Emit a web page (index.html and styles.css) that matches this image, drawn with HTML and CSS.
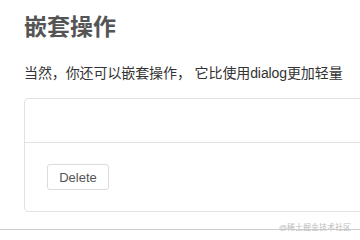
FILE: index.html
```html
<!DOCTYPE html>
<html lang="zh-CN">
<head>
<meta charset="utf-8">
<link rel="stylesheet" href="styles.css">
</head>
<body>
<div class="page">
  <h1 class="title">嵌套操作</h1>
  <p class="desc">当然，你还可以嵌套操作， 它比使用dialog更加轻量</p>
  <div class="card">
    <div class="card-head"></div>
    <div class="card-body">
      <button class="btn">Delete</button>
    </div>
  </div>
</div>
<div class="rule"></div>
<div class="watermark">@稀土掘金技术社区</div>
</body>
</html>
```
FILE: styles.css
```css
html, body {
  margin: 0;
  padding: 0;
  background: #fff;
}
body {
  width: 360px;
  height: 240px;
  overflow: hidden;
  position: relative;
  font-family: "Liberation Sans", "Noto Sans CJK SC", sans-serif;
}
.page {
  padding: 12px 0 0 24px;
  overflow: hidden;
}
.title {
  margin: 0;
  font-size: 23px;
  line-height: 30px;
  font-weight: 700;
  color: #555;
}
.desc {
  margin: 20px 0 0 0;
  font-size: 14px;
  line-height: 22px;
  letter-spacing: -0.1px;
  color: #333;
}
.card {
  margin-top: 14px;
  margin-right: -12px;
  border: 1px solid #e2e2e2;
  border-radius: 4px;
}
.card-head {
  height: 43px;
  border-bottom: 1px solid #e2e2e2;
}
.card-body {
  padding: 21px 22px 21px 22px;
}
.btn {
  display: block;
  width: 62px;
  height: 26px;
  padding: 0;
  border: 1px solid #dcdcdc;
  border-radius: 3px;
  background: #fff;
  font-family: "Liberation Sans", sans-serif;
  font-size: 13px;
  color: #555;
}
.rule {
  margin-top: 17px;
  height: 1px;
  background: #cfcfcf;
}
.watermark {
  position: absolute;
  right: 9px;
  top: 223px;
  font-size: 8px;
  line-height: 10px;
  color: #bbb;
}
```
